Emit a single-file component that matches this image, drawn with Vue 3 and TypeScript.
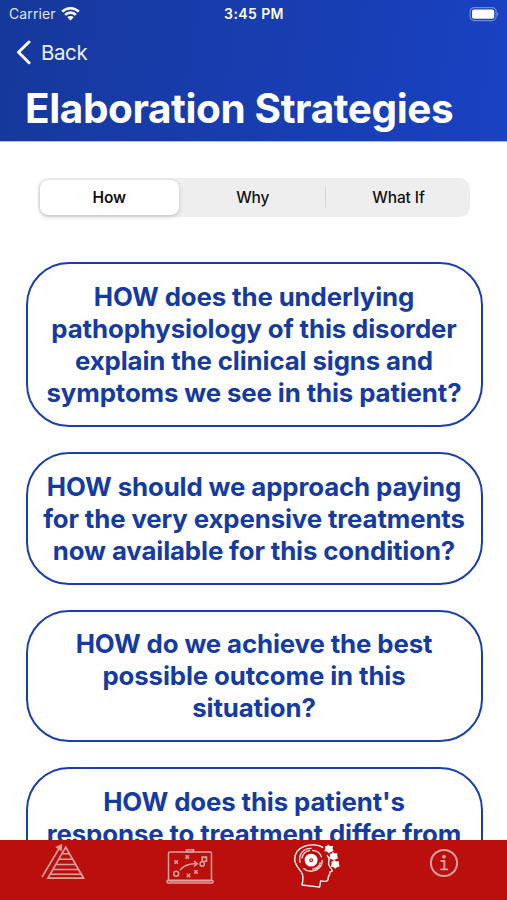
<script setup lang="ts">
import { ref } from 'vue'

interface Card {
  lines: string[]
}

const tabs: string[] = ['How', 'Why', 'What If']
const active = ref<number>(0)

const cards: Card[] = [
  {
    lines: [
      'HOW does the underlying',
      'pathophysiology of this disorder',
      'explain the clinical signs and',
      'symptoms we see in this patient?',
    ],
  },
  {
    lines: [
      'HOW should we approach paying',
      'for the very expensive treatments',
      'now available for this condition?',
    ],
  },
  { lines: ['HOW do we achieve the best', 'possible outcome in this', 'situation?'] },
  { lines: ["HOW does this patient's", 'response to treatment differ from'] },
]
</script>

<template>
  <div class="screen">
    <header class="header">
      <div class="status">
        <div class="carrier">
          <span>Carrier</span>
          <svg class="wifi" width="19" height="15" viewBox="0 0 19 15">
            <g fill="none" stroke="#fff" stroke-width="2.6">
              <path d="M1.2 5.6a11.8 11.8 0 0 1 16.6 0" />
              <path d="M4.1 8.9a7.6 7.6 0 0 1 10.8 0" />
            </g>
            <path d="M9.5 14.6 6.3 11.3a4.6 4.6 0 0 1 6.4 0z" fill="#fff" />
          </svg>
        </div>
        <span class="clock">3:45 PM</span>
        <div class="power">
          <svg width="30" height="15" viewBox="0 0 30 15">
            <rect x="1.1" y=".6" width="26" height="13" rx="4" fill="none" stroke="#fff" stroke-opacity=".38" stroke-width="1.2" />
            <rect x="3" y="2.5" width="22.2" height="9.2" rx="2" fill="#fff" />
            <path d="M28.3 4.8q2 2.3 0 4.6z" fill="#fff" fill-opacity=".45" />
          </svg>
        </div>
      </div>
      <a class="back">
        <svg width="16" height="25" viewBox="0 0 16 25">
          <path d="M13 2 2.5 12.3 13 22.7" fill="none" stroke="#fff" stroke-width="3" stroke-linecap="round" stroke-linejoin="round" />
        </svg>
        <span>Back</span>
      </a>
      <h1 class="title">Elaboration Strategies</h1>
    </header>

    <main class="content">
      <div class="segments">
        <button
          v-for="(tab, i) in tabs"
          :key="tab"
          class="segment"
          :class="{ active: i === active, divided: i > 0 && i - 1 !== active && i !== active }"
          @click="active = i"
        >
          {{ tab }}
        </button>
      </div>
      <div class="cards">
        <section v-for="card in cards" :key="card.lines[0]" class="card">
          <div v-for="line in card.lines" :key="line" class="line">{{ line }}</div>
        </section>
      </div>
    </main>

    <nav class="tabbar">
      <a class="tab">
        <svg width="46" height="38" viewBox="0 0 46 38" fill="none" stroke="#dba19d" stroke-width="1.5">
          <path d="M25.7 3.2 8 34.2h35.6z" stroke-width="1.7" />
          <path d="M22 9.8h7.4M19 15.3h13.4M15.8 20.6h19.6M12.7 25.6h26M10 30.2h31.2" />
          <path d="M2 33 20 3" />
          <path d="M15.8 3.2 21.8.4l-.4 6.3z" fill="#dba19d" stroke-width=".8" />
        </svg>
      </a>
      <a class="tab">
        <svg width="48" height="38" viewBox="0 0 48 38" fill="none" stroke="#dba19d" stroke-width="1.5">
          <rect x="2.5" y="4" width="43" height="29" rx="1.5" />
          <rect x="1" y="32.3" width="46" height="2.6" rx="1" />
          <path d="M20.5 4V1.7h7V4z" />
          <circle cx="10.2" cy="25.8" r="2.5" />
          <circle cx="36.2" cy="16" r="2.2" />
          <path d="M14 22q6-6.5 15.5-6.2M28 13.2l3.2 2.6L28 18.5M36.2 14v-5h4.3v4.3h-3M37.5 9.5l3-.2" />
          <path d="m8.5 12.4 3.4 3.4m0-3.4-3.4 3.4m11-8.6 3.4 3.4m0-3.4-3.4 3.4m1.3 15.2 3.4 3.4m0-3.4-3.4 3.4m7.5-7 3.4 3.4m0-3.4-3.4 3.4" />
        </svg>
      </a>
      <a class="tab">
        <svg width="47" height="45" viewBox="-.5 0 48 46" fill="none" stroke="#fff" stroke-width="1.4" stroke-linejoin="round">
          <path d="M30.3 3.7C25.5.5 16.7-.1 10.2 2.7 4.2 5.3 1 10.5 1.3 16.3c.3 5.2 3.8 8.3 6.6 12.1 2.1 3 2 8.5.8 13.5l18 2.2 1-6.3c2.2.1 5.4 1 7-.3 1.1-.9.4-2.4.9-3.8.3-.9 1-1.2.8-2.2 1.3-.5.3-1.8.7-2.8l2.5-1.1c-.5-2.3-3-4.4-3.7-6.8-.4-1.8.6-3.5.4-5.2-.2-1.6-1-3-2.1-4.1" />
          <circle cx="18" cy="16.5" r="4.3" stroke-width="4.6" />
          <circle cx="18" cy="16.5" r=".8" fill="#fff" stroke="none" />
          <path d="M6.8 19.2C4.3 9.5 11.5 4 18.5 4.5m.5 2c4.5 0 8.3 3 9.7 7.1m-20.2 1C9.6 9.6 13 6.8 17 6.5m12.4 9.8c.3 6.8-5 11.4-12 11.5-2.8 0-5.3-1-7.4-3m9.2.9c4.3-.4 7.4-3.3 8.3-6.8" opacity=".85" />
          <g fill="#fff" stroke="#fff" stroke-width="1.4" stroke-linejoin="miter">
            <path d="m35.5 1.5 2 1.3 2-.1-.3 2.1.8 1.9-2.2.7-1.7 1.2-1.6-1.5-2.1-.3.9-2-.2-2.1 2 .1z" />
            <path d="m40.3 9.3 1.8 1.1 2-.1-.2 2.1.8 1.8-2 .7-1.7 1.3-1.6-1.4-2.1-.4.8-1.9-.2-2 2 .1z" />
            <path d="m41.9 17.4 1.8 1.1 2-.1-.2 2.1.8 1.8-2 .7-1.7 1.3-1.6-1.4-2.1-.4.8-1.9-.2-2 2 .1z" />
          </g>
        </svg>
      </a>
      <a class="tab">
        <svg width="30" height="30" viewBox="0 0 30 30" fill="none" stroke="#dba19d">
          <circle cx="15" cy="15" r="13.1" stroke-width="2" />
          <circle cx="15" cy="8.7" r="1.9" fill="#dba19d" stroke="none" />
          <path d="M11.6 13h3.8v8.3M11.3 21.4h7.8" stroke-width="1.9" />
        </svg>
      </a>
    </nav>
  </div>
</template>

<style>
body {
  margin: 0;
  overflow: hidden;
}
</style>

<style scoped>
.screen {
  display: flex;
  flex-direction: column;
  width: 507px;
  height: 900px;
  overflow: hidden;
  background: #fff;
  font-family: Inter, 'Liberation Sans', sans-serif;
}
.header {
  flex: none;
  box-sizing: border-box;
  height: 142px;
  border-bottom: 1px solid #a9b8e4;
  background: linear-gradient(100deg, #16389b 0%, #183daf 50%, #1941c2 100%);
  color: #fff;
}
.status {
  display: grid;
  grid-template-columns: 1fr auto 1fr;
  align-items: center;
  height: 28px;
  padding: 0 8px 0 9px;
  font-size: 14px;
  line-height: 28px;
}
.carrier {
  display: flex;
  align-items: center;
  gap: 6px;
  color: #dfe6f8;
}
.carrier span {
  letter-spacing: 0.1px;
}
.wifi {
  margin: -2px 0 0 -1px;
}
.clock {
  font-weight: 600;
  letter-spacing: 0.4px;
}
.power {
  display: flex;
  justify-content: flex-end;
}
.back {
  display: flex;
  align-items: center;
  gap: 9px;
  height: 48px;
  padding-left: 16px;
  color: #eaf0ff;
  font-size: 20.5px;
  letter-spacing: -0.4px;
}
.title {
  margin: 8px 0 0 25px;
  font-size: 40.5px;
  line-height: 50px;
  font-weight: 700;
  letter-spacing: -0.4px;
  white-space: nowrap;
}
.content {
  flex: 1;
  min-height: 0;
  overflow: hidden;
  padding: 36px 24.5px 0 25.5px;
}
.segments {
  display: grid;
  grid-template-columns: 138.5px 146.5px 145px;
  box-sizing: border-box;
  height: 39px;
  margin: 0 12.5px;
  padding: 2px 0 2px 2px;
  border-radius: 10px;
  background: #eee;
}
.segment {
  display: flex;
  align-items: center;
  justify-content: center;
  margin: 0;
  padding: 0;
  border: 0;
  border-radius: 8px;
  background: transparent;
  color: #111;
  font: 500 15.5px Inter, 'Liberation Sans', sans-serif;
  letter-spacing: -0.1px;
}
.segment:nth-child(2),
.segment:nth-child(3) {
  padding-left: 2px;
}
.segment.active {
  background: #fff;
  box-shadow: 0 2px 5px rgba(0, 0, 0, 0.16), 0 0 1px rgba(0, 0, 0, 0.12);
  font-weight: 600;
}
.segment.divided {
  background: linear-gradient(#d4d4d4, #d4d4d4) left center / 1px 21px no-repeat;
}
.cards {
  display: flex;
  flex-direction: column;
  gap: 25px;
  margin-top: 45.4px;
}
.card {
  box-sizing: border-box;
  padding: 16.8px 0 16px;
  border: 2px solid #1a3fa9;
  border-radius: 43px;
  color: #153ba3;
  font-size: 25.8px;
  line-height: 31.95px;
  font-weight: 700;
  letter-spacing: -0.12px;
  text-align: center;
  white-space: nowrap;
}
.card:last-child {
  height: 160px;
}
.tabbar {
  flex: none;
  display: grid;
  grid-template-columns: repeat(4, 1fr);
  height: 60px;
  background: #bb0f0e;
}
.tab {
  display: flex;
  justify-content: center;
  align-items: flex-start;
  padding-top: 4px;
}
.tab:nth-child(1) {
  padding-top: 3.5px;
}
.tab:nth-child(2) {
  padding-top: 8px;
}
.tab:nth-child(4) {
  padding-top: 8px;
}
</style>
